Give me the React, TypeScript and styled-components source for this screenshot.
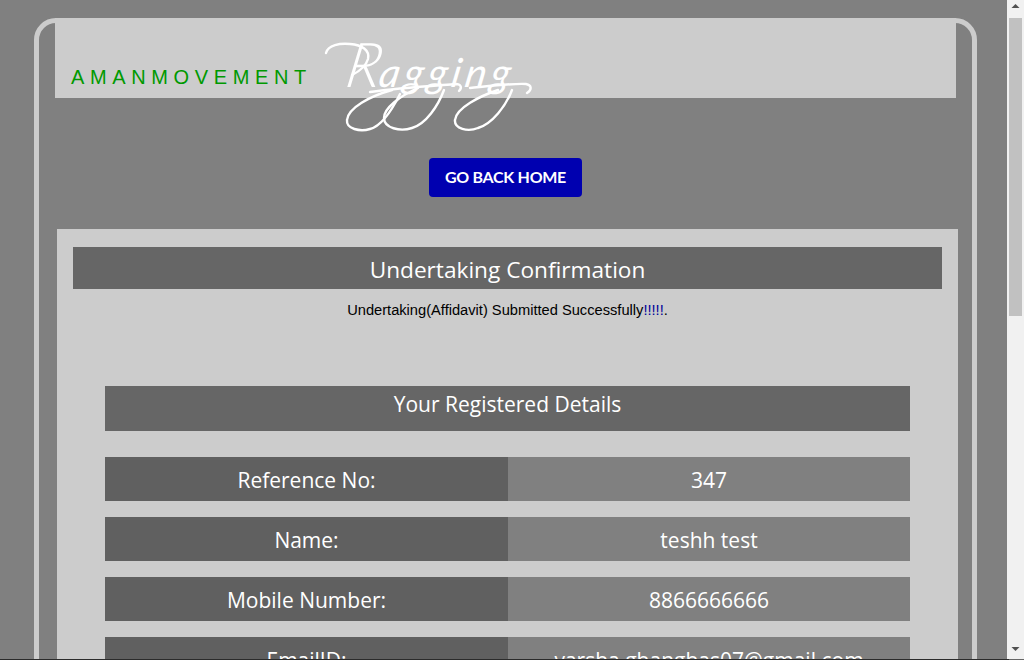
import React from "react";
import styled, { createGlobalStyle } from "styled-components";

const Global = createGlobalStyle`
  html, body { margin: 0; padding: 0; background: #808080; }
  body { font-family: "Open Sans", "Liberation Sans", sans-serif; }
`;

const Frame = styled.div`
  box-sizing: border-box;
  width: 943px;
  min-height: 1368px;
  margin: 18px 0 0 34px;
  border: 5px solid #ccc;
  border-radius: 22px;
  display: flex;
  flex-direction: column;
`;

const Header = styled.header`
  box-sizing: border-box;
  width: 901px;
  height: 80px;
  margin: -5px 0 0 16px;
  padding: 45px 0 0 16px;
  background: #ccc;
  display: flex;
  align-items: flex-start;
`;

const Brand = styled.h1`
  margin: 0;
  font: 400 20px/28px "Liberation Sans", Arial, sans-serif;
  letter-spacing: 5.62px;
  color: #009900;
`;

const Logo = styled.div`
  position: relative;
  width: 220px;
  height: 30px;
  margin-left: 8px;
`;

const LogoWord = styled.span`
  position: absolute;
  left: 20px;
  top: -35px;
  font: italic 400 40px/70px "Lato", sans-serif;
  letter-spacing: 4.4px;
  color: #fff;
  transform: skewX(-10deg);
  transform-origin: left bottom;
  white-space: nowrap;
`;

const LogoCap = styled.span`
  font-size: 62px;
  font-weight: 300;
  letter-spacing: -1px;
`;

const Swash = styled.svg`
  position: absolute;
  left: 0;
  top: -33px;
  width: 220px;
  height: 110px;
  overflow: visible;
`;

const BackButton = styled.a`
  align-self: center;
  box-sizing: border-box;
  width: 153px;
  height: 39px;
  margin-top: 60px;
  background: #0000b0;
  border-radius: 4px;
  color: #fff;
  font: 700 16px/38px "Lato", sans-serif;
  letter-spacing: -0.3px;
  text-align: center;
  text-decoration: none;
`;

const Panel = styled.main`
  box-sizing: border-box;
  width: 901px;
  min-height: 1100px;
  margin: 32px 0 0 18px;
  padding: 18px 16px;
  background: #ccc;
`;

const Title = styled.h2`
  margin: 0;
  height: 42px;
  background: #666;
  color: #fff;
  font-weight: 400;
  font-size: 22.65px;
  line-height: 45px;
  text-align: center;
`;

const Message = styled.p`
  margin: 12px 0 0;
  height: 85px;
  color: #000;
  font: 14.67px/18px "Liberation Sans", Arial, sans-serif;
  text-align: center;
`;

const Bang = styled.span`
  color: #000099;
`;

const Details = styled.section`
  margin: 0 32px;
  display: flex;
  flex-direction: column;
  gap: 16px;
`;

const DetailsTitle = styled.h3`
  margin: 0 0 10px;
  height: 45px;
  background: #666;
  color: #fff;
  font-weight: 400;
  font-size: 21px;
  line-height: 36px;
  text-align: center;
`;

const Row = styled.div`
  display: grid;
  grid-template-columns: 403px 402px;
  height: 44px;
`;

const Cell = styled.div<{ $label?: boolean }>`
  box-sizing: border-box;
  height: 44px;
  padding-top: 1px;
  background: ${(p) => (p.$label ? "#606060" : "#808080")};
  color: #fff;
  font-size: 21px;
  line-height: 44px;
  text-align: center;
`;

const BottomEdge = styled.div`
  position: fixed;
  left: 0;
  right: 15px;
  bottom: 0;
  height: 1px;
  background: #2b2b2b;
  z-index: 2;
`;

const ScrollBar = styled.aside`
  position: fixed;
  top: 0;
  right: 0;
  bottom: 0;
  width: 17px;
  box-sizing: border-box;
  background: #f1f1f1;
  border-bottom: 1px solid #666;
  display: flex;
  flex-direction: column;
  justify-content: space-between;
`;

const ScrollArrow = styled.svg`
  display: block;
  width: 17px;
  height: 17px;
  flex: none;
`;

const ScrollTrack = styled.div`
  flex: 1;
  padding: 1px 2px;
`;

const ScrollThumb = styled.div`
  height: 298px;
  background: #c1c1c1;
`;

const rows: [string, string][] = [
  ["Reference No:", "347"],
  ["Name:", "teshh test"],
  ["Mobile Number:", "8866666666"],
  ["EmailID:", "varsha.ghanghas07@gmail.com"],
];

export default function App() {
  return (
    <>
      <Global />
      <Frame>
        <Header>
          <Brand>AMANMOVEMENT</Brand>
          <Logo>
            <LogoWord>
              <LogoCap>R</LogoCap>agging
            </LogoWord>
            <Swash viewBox="0 0 220 110" fill="none" stroke="#fff" strokeWidth="2.4" strokeLinecap="round" aria-hidden="true">
              <path d="M6 23C8 15 20 13 30 14C42 15 50 20 48 29C46 36 38 42 32 45" />
              <path d="M50 62C78 58 110 56 136 54C140 54 143 57 139 61" />
              <path d="M150 58C170 56 195 53 206 54C212 55 212 60 207 63" />
              <path d="M72 60C50 66 28 78 27 90C26 99 40 102 50 99C62 96 72 80 80 64" />
              <path d="M98 58C80 66 64 78 64 88C64 98 80 102 92 98C106 94 118 76 124 60" />
              <path d="M178 60C160 66 136 78 135 90C134 99 148 102 158 98C172 94 186 76 192 60" />
            </Swash>
          </Logo>
        </Header>
        <BackButton href="#">GO BACK HOME</BackButton>
        <Panel>
          <Title>Undertaking Confirmation</Title>
          <Message>
            Undertaking(Affidavit) Submitted Successfully<Bang>!!!!!</Bang>.
          </Message>
          <Details>
            <DetailsTitle>Your Registered Details</DetailsTitle>
            {rows.map(([label, value]) => (
              <Row key={label}>
                <Cell $label>{label}</Cell>
                <Cell>{value}</Cell>
              </Row>
            ))}
          </Details>
        </Panel>
      </Frame>
      <BottomEdge />
      <ScrollBar aria-hidden="true">
        <ScrollArrow viewBox="0 0 17 17">
          <path d="M4.5 8L8.5 4L12.5 8Z" fill="#505050" />
        </ScrollArrow>
        <ScrollTrack>
          <ScrollThumb />
        </ScrollTrack>
        <ScrollArrow viewBox="0 0 17 17">
          <path d="M4.5 5L12.5 5L8.5 9Z" fill="#505050" />
        </ScrollArrow>
      </ScrollBar>
    </>
  );
}
